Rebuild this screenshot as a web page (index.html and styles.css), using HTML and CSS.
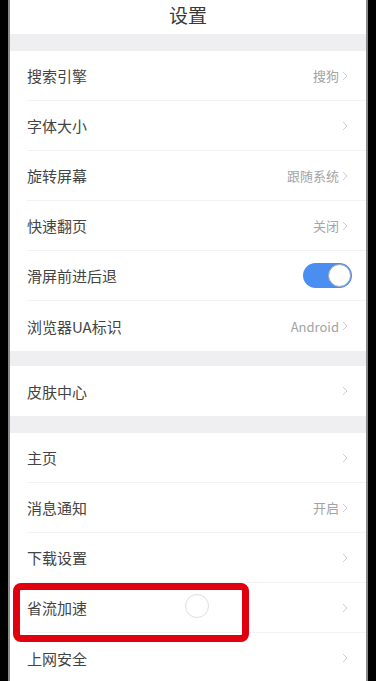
FILE: index.html
```html
<!DOCTYPE html>
<html lang="zh">
<head>
<meta charset="utf-8">
<title>设置</title>
<link rel="stylesheet" href="styles.css">
</head>
<body>
<div class="screen">
  <header class="header">设置</header>
  <div class="gap"></div>
  <section class="group">
    <div class="row"><div class="inner"><span class="label">搜索引擎</span><span class="value">搜狗<svg class="chev" viewBox="0 0 6 10"><polyline points="1,1 5,5 1,9"/></svg></span></div></div>
    <div class="row"><div class="inner"><span class="label">字体大小</span><span class="value"><svg class="chev" viewBox="0 0 6 10"><polyline points="1,1 5,5 1,9"/></svg></span></div></div>
    <div class="row"><div class="inner"><span class="label">旋转屏幕</span><span class="value">跟随系统<svg class="chev" viewBox="0 0 6 10"><polyline points="1,1 5,5 1,9"/></svg></span></div></div>
    <div class="row"><div class="inner"><span class="label">快速翻页</span><span class="value">关闭<svg class="chev" viewBox="0 0 6 10"><polyline points="1,1 5,5 1,9"/></svg></span></div></div>
    <div class="row"><div class="inner"><span class="label">滑屏前进后退</span><span class="toggle"><span class="knob"></span></span></div></div>
    <div class="row"><div class="inner"><span class="label">浏览器UA标识</span><span class="value">Android<svg class="chev" viewBox="0 0 6 10"><polyline points="1,1 5,5 1,9"/></svg></span></div></div>
  </section>
  <div class="gap gap-mid"></div>
  <section class="group">
    <div class="row"><div class="inner"><span class="label">皮肤中心</span><span class="value"><svg class="chev" viewBox="0 0 6 10"><polyline points="1,1 5,5 1,9"/></svg></span></div></div>
  </section>
  <div class="gap"></div>
  <section class="group">
    <div class="row"><div class="inner"><span class="label">主页</span><span class="value"><svg class="chev" viewBox="0 0 6 10"><polyline points="1,1 5,5 1,9"/></svg></span></div></div>
    <div class="row"><div class="inner"><span class="label">消息通知</span><span class="value">开启<svg class="chev" viewBox="0 0 6 10"><polyline points="1,1 5,5 1,9"/></svg></span></div></div>
    <div class="row"><div class="inner"><span class="label">下载设置</span><span class="value"><svg class="chev" viewBox="0 0 6 10"><polyline points="1,1 5,5 1,9"/></svg></span></div></div>
    <div class="row row-rel"><div class="inner"><span class="label">省流加速</span><span class="value"><svg class="chev" viewBox="0 0 6 10"><polyline points="1,1 5,5 1,9"/></svg></span></div><span class="ring"></span></div>
    <div class="row"><div class="inner"><span class="label">上网安全</span><span class="value"><svg class="chev" viewBox="0 0 6 10"><polyline points="1,1 5,5 1,9"/></svg></span></div></div>
  </section>
  <div class="highlight"></div>
</div>
</body>
</html>
```
FILE: styles.css
```css
* { box-sizing: border-box; }
html, body {
  margin: 0;
  padding: 0;
  background: #000;
  height: 100%;
  overflow: hidden;
}
body {
  font-family: "Noto Sans CJK SC", "Noto Sans", sans-serif;
  color: #444;
}
.screen {
  position: relative;
  margin: 0 8px 0 8px;
  width: 360px;
  height: 681px;
  background: #fff;
  border-left: 2px solid #8a8a8a;
  border-right: 2px solid #8a8a8a;
  overflow: hidden;
}
.header {
  height: 34px;
  display: flex;
  align-items: center;
  justify-content: center;
  font-size: 19px;
  color: #383838;
  padding-bottom: 5px;
}
.gap {
  height: 17px;
  background: #efeff2;
}
.gap-mid { height: 15px; }
.group { background: #fff; }
.row {
  height: 50px;
  padding-left: 17px;
  display: flex;
}
.row-rel { position: relative; }
.inner {
  flex: 1;
  display: flex;
  align-items: center;
  justify-content: space-between;
  padding-right: 18px;
  border-bottom: 1px solid #f3f3f3;
}
.row:last-child .inner { border-bottom: none; }
.label {
  font-size: 15px;
  color: #444;
}
.value {
  display: flex;
  align-items: center;
  font-size: 13px;
  color: #a4a4a4;
}
.chev {
  width: 6px;
  height: 10px;
  margin-left: 3px;
  fill: none;
  stroke: #cfcfd3;
  stroke-width: 1;
}
.toggle {
  position: relative;
  width: 49px;
  height: 25px;
  border-radius: 13px;
  background: #4b8ef1;
  margin-right: -4px;
}
.knob {
  position: absolute;
  right: 1px;
  top: 1px;
  width: 23px;
  height: 23px;
  border-radius: 50%;
  background: #fff;
  border: 1px solid #9aa4b4;
}
.ring {
  position: absolute;
  left: 175px;
  top: 11px;
  width: 24px;
  height: 24px;
  border-radius: 50%;
  border: 1.5px solid #dedede;
}
.highlight {
  position: absolute;
  left: 3px;
  top: 583px;
  width: 236px;
  height: 59px;
  border: 7px solid #e00010;
  border-radius: 8px;
}
```
